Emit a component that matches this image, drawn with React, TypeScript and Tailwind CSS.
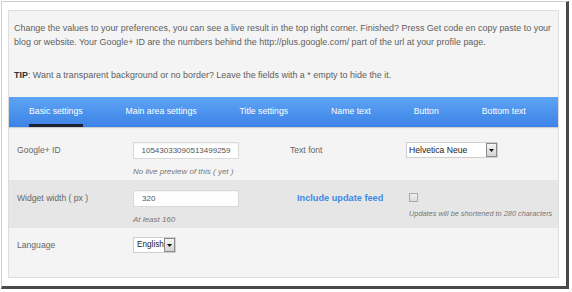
import { useState } from "react"

const tabs = ["Basic settings", "Main area settings", "Title settings", "Name text", "Button", "Bottom text"]

function Arrow() {
  return (
    <span className="flex h-full w-[11px] items-center justify-center border border-[#8a8a8a] bg-gradient-to-b from-[#f6f6f6] to-[#d4d4d4]">
      <svg width="5" height="3" viewBox="0 0 5 3">
        <path d="M0 0h5L2.5 3z" fill="#111" />
      </svg>
    </span>
  )
}

export default function App() {
  const [active, setActive] = useState(0)

  return (
    <div className="w-[572px] h-[292px] bg-white font-['Liberation_Sans',Arial,sans-serif]">
      <div className="ml-[1px] mt-[1px] w-[568px] h-[288px] border-l border-t border-[#cfcfcf] border-r-[3px] border-b-[3px] border-r-[#4a4a4a] border-b-[#4a4a4a] bg-white pl-[6px] pt-[8px]">
        <div className="w-[551px] h-[268px] border border-[#dedede] bg-[#f4f4f4]">
          <div className="pl-[5px] pt-[10px] text-[8.95px] leading-[14px] text-[#606060] whitespace-nowrap">
            <p>
              Change the values to your preferences, you can see a live result in the top right corner. Finished? Press Get code en copy paste to your
              <br />
              blog or website. Your Google+ ID are the numbers behind the http://plus.google.com/ part of the url at your profile page.
            </p>
            <p className="mt-[19px] mb-[15px]">
              <b className="text-[#333]">TIP</b>: Want a transparent background or no border? Leave the fields with a * empty to hide the it.
            </p>
          </div>

          <div className="flex h-[30px] gap-[43px] pl-[20px] bg-gradient-to-b from-[#5ea4f3] to-[#3c83e8] shadow-[0_1px_1px_rgba(0,0,0,0.15)]">
            {tabs.map((t, i) => (
              <button
                key={t}
                onClick={() => setActive(i)}
                className={
                  "flex items-center border-b-[3px] pt-[3px] text-[8.7px] text-white " +
                  (i === active ? "border-[#1b2230]" : "border-transparent")
                }
              >
                {t}
              </button>
            ))}
          </div>

          <div className="grid grid-cols-[124px_157px_116px_1fr] h-[53px] pt-[15px] text-[8.6px] text-[#666]">
            <div className="flex h-[17px] items-center pl-[8px]">Google+ ID</div>
            <div>
              <div className="flex h-[17px] w-[106px] items-center justify-center border border-[#dadada] bg-white text-[8px] text-[#555] shadow-[inset_0_1px_2px_rgba(0,0,0,0.06)]">
                10543033090513499259
              </div>
              <div className="mt-[7px] text-[8px] leading-[12px] italic text-[#777]">No live preview of this ( yet )</div>
            </div>
            <div className="flex h-[17px] items-center">Text font</div>
            <div>
              <div className="flex h-[16px] w-[92px] items-center border border-[#cfcfcf] bg-white">
                <span className="flex-1 pl-[2px] text-[8.6px] text-[#222]">Helvetica Neue</span>
                <Arrow />
              </div>
            </div>
          </div>

          <div className="grid grid-cols-[124px_157px_116px_1fr] h-[48px] pt-[10px] bg-[#e6e6e6] text-[8.6px] text-[#666]">
            <div className="flex h-[17px] items-center pl-[8px]">Widget width ( px )</div>
            <div>
              <div className="flex h-[17px] w-[106px] items-center border border-[#dadada] bg-white pl-[8px] text-[8px] text-[#555] shadow-[inset_0_1px_2px_rgba(0,0,0,0.06)]">
                320
              </div>
              <div className="mt-[7px] text-[8px] leading-[12px] italic text-[#777]">At least 160</div>
            </div>
            <div className="flex h-[17px] items-center pl-[7px] text-[9.2px] font-bold text-[#3d8ae6]">Include update feed</div>
            <div className="pt-[3px] pl-[3px]">
              <span className="block h-[9px] w-[9px] border border-[#a9a9a9] bg-gradient-to-b from-[#f0f0f0] to-[#dcdcdc]" />
              <div className="mt-[7px] text-[7.35px] leading-[10px] italic text-[#777] whitespace-nowrap">Updates will be shortened to 280 characters</div>
            </div>
          </div>

          <div className="grid grid-cols-[124px_1fr] pt-[9px] text-[8.6px] text-[#666]">
            <div className="flex h-[16px] items-center pl-[8px]">Language</div>
            <div className="flex h-[16px] w-[43px] items-center border border-[#cfcfcf] bg-white">
              <span className="flex-1 pl-[3px] text-[8.2px] text-[#222]">English</span>
              <Arrow />
            </div>
          </div>
        </div>
      </div>
    </div>
  )
}
